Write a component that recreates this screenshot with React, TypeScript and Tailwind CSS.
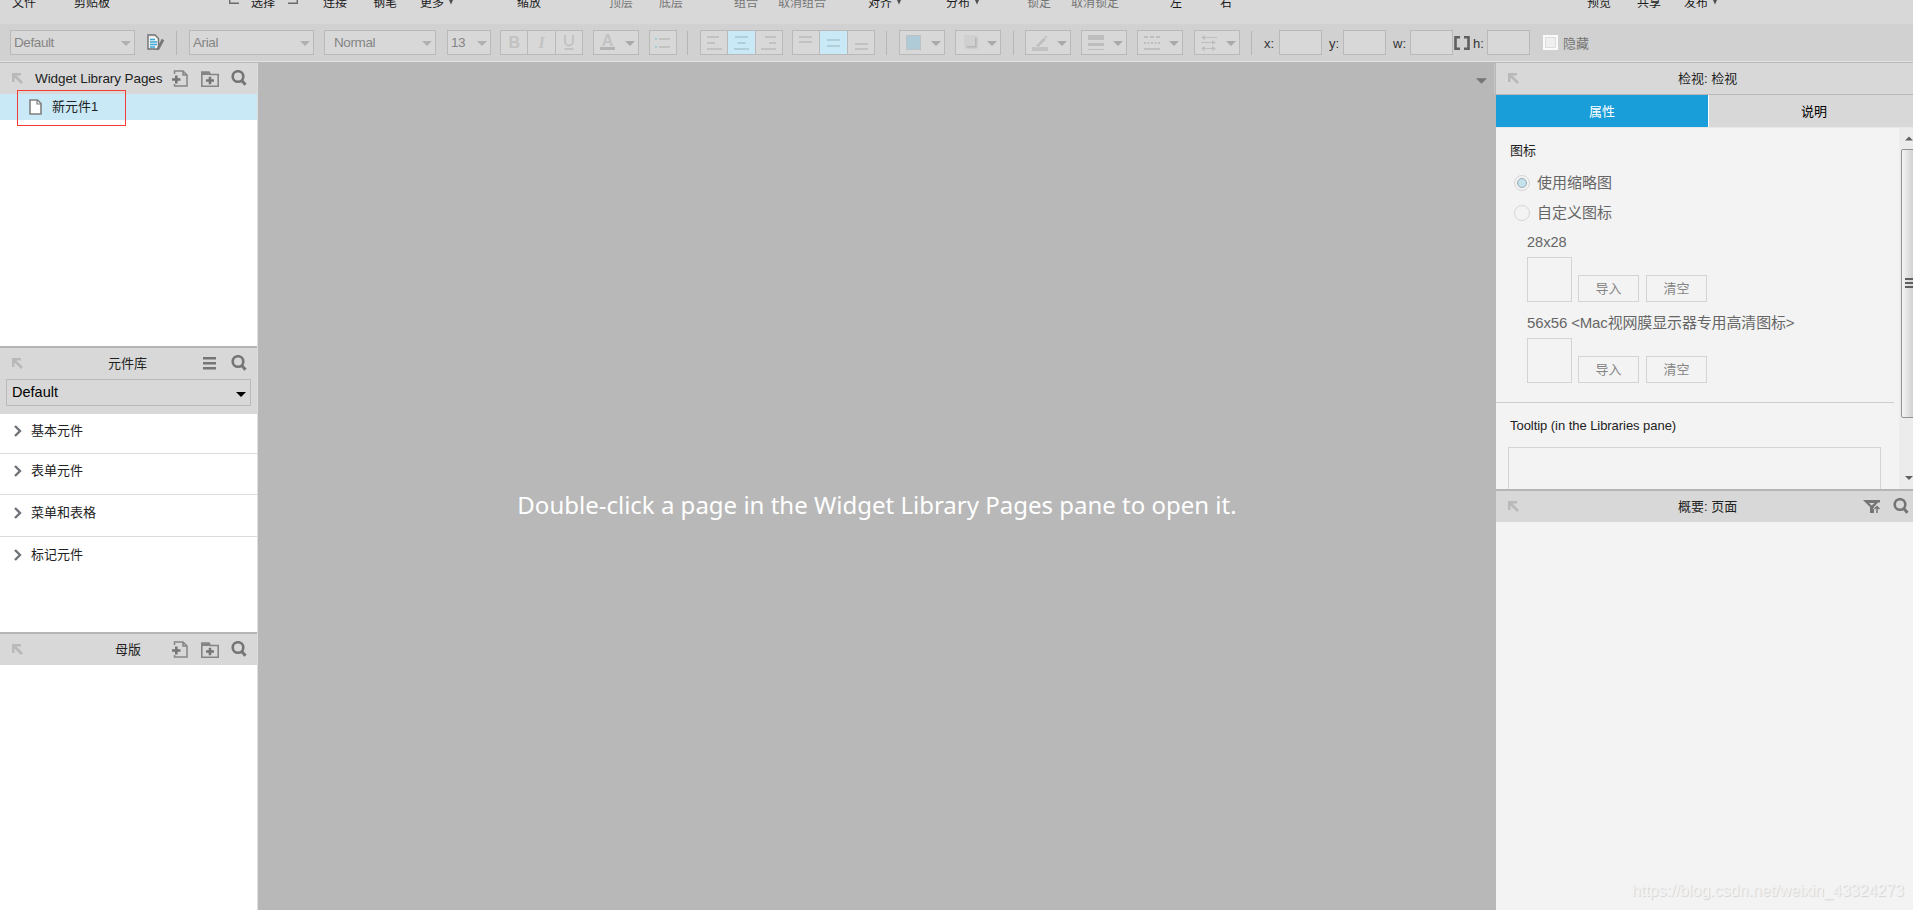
import * as React from "react"
import { clsx } from "clsx"

interface MenuItem {
  label: string;
  width: string;
  caret?: boolean;
  disabled?: boolean;
  corner?: "left" | "right";
}

const menuItems: MenuItem[] = [
  { label: "文件", width: "w-[62px]" },
  { label: "剪贴板", width: "w-[155px]" },
  { label: "", width: "w-[22px]", corner: "left" },
  { label: "选择", width: "w-[37px]" },
  { label: "", width: "w-[35px]", corner: "right" },
  { label: "连接", width: "w-[50px]" },
  { label: "钢笔", width: "w-[47px]" },
  { label: "更多", width: "w-[97px]", caret: true },
  { label: "缩放", width: "w-[92px]" },
  { label: "顶层", width: "w-[50px]", disabled: true },
  { label: "底层", width: "w-[75px]", disabled: true },
  { label: "组合", width: "w-[44px]", disabled: true },
  { label: "取消组合", width: "w-[90px]", disabled: true },
  { label: "对齐", width: "w-[78px]", caret: true },
  { label: "分布", width: "w-[81px]", caret: true },
  { label: "锁定", width: "w-[44px]", disabled: true },
  { label: "取消锁定", width: "w-[99px]", disabled: true },
  { label: "左", width: "w-[50px]" },
  { label: "右", width: "w-[367px]" },
  { label: "预览", width: "w-[50px]" },
  { label: "共享", width: "w-[47px]" },
  { label: "发布", width: "w-[60px]", caret: true },
];

const categories = [
  { label: "基本元件", height: "h-[40px]" },
  { label: "表单元件", height: "h-[41px]" },
  { label: "菜单和表格", height: "h-[42px]" },
  { label: "标记元件", height: "h-[42px]" },
];

function Triangle({ className }: { className?: string }) {
  return (
    <svg width="10" height="5" viewBox="0 0 10 5" className={clsx("shrink-0", className)}>
      <path d="M0 0h10L5 5z" fill="currentColor" />
    </svg>
  );
}

function MenuBar() {
  return (
    <div className="flex h-6 shrink-0 items-start overflow-hidden bg-[#d8d8d8] pl-3 text-xs text-[#1a1a1a]">
      {menuItems.map((item, i) => (
        <div
          key={i}
          className={clsx("-mt-[5px] flex h-4 shrink-0 items-center whitespace-nowrap", item.width, item.disabled && "text-[#757575]")}
        >
          {item.label}
          {item.corner && (
            <svg width="10" height="16" viewBox="0 0 10 16" fill="none" stroke="#6b6b6b" strokeWidth="1.4">
              <path d={item.corner === "left" ? "M.7 0v8.3H10" : "M9.3 0v8.3H0"} />
            </svg>
          )}
          {item.caret && (
            <svg width="6" height="6" viewBox="0 0 6 6" className="mb-0.5 ml-1">
              <path d="M.5 0h5L3 5.5z" fill="#505050" />
            </svg>
          )}
        </div>
      ))}
    </div>
  );
}

function Separator({ className }: { className?: string }) {
  return <div className={clsx("h-6 w-px shrink-0 bg-[#b6b6b6]", className)} />;
}

function SelectBox({ label, className }: { label: string; className?: string }) {
  return (
    <div className={clsx("flex h-[25px] shrink-0 items-center justify-between border border-[#b9b9b9] bg-[#d8d8d8] pr-[3px] text-[13.5px] tracking-[-0.4px] text-[#858585]", className)}>
      <span className="pt-0.5">{label}</span>
      <Triangle className="mt-0.5 text-[#b0b0b0]" />
    </div>
  );
}

function ButtonGroup({ className, active, children }: { className?: string; active?: number; children: React.ReactNode }) {
  return (
    <div className={clsx("flex h-[25px] w-[83px] shrink-0 border border-[#b9b9b9] bg-[#d8d8d8]", className)}>
      {React.Children.map(children, (child, i) => (
        <div
          className={clsx("flex flex-1 items-center justify-center", i > 0 && "border-l border-[#b9b9b9]", i === active && "bg-[#c9e9f6]")}
        >
          {child}
        </div>
      ))}
    </div>
  );
}

function DropButton({ className, children }: { className?: string; children: React.ReactNode }) {
  return (
    <div className={clsx("flex h-[25px] w-[46px] shrink-0 items-center justify-between border border-[#b9b9b9] bg-[#d8d8d8] pr-[3px] pl-[6px]", className)}>
      {children}
      <Triangle className="mt-0.5 text-[#a9a9a9]" />
    </div>
  );
}

function Lines({ d, active }: { d: string; active?: boolean }) {
  return (
    <svg width="16" height="16" viewBox="0 0 16 16" fill="none" stroke={active ? "#b2ced9" : "#c2c2c2"} strokeWidth="2">
      <path d={d} />
    </svg>
  );
}

function Letter({ className, children }: { className?: string; children: React.ReactNode }) {
  return <span className={clsx("text-base leading-none font-bold text-[#c2c2c2]", className)}>{children}</span>;
}

function Field({ label, className, labelWidth }: { label: string; className?: string; labelWidth: string }) {
  return (
    <label className={clsx("flex shrink-0 items-center text-[13px] text-[#333]", className)}>
      <span className={clsx("pt-0.5", labelWidth)}>{label}</span>
      <span className="h-[25px] w-[43px] border border-[#b9b9b9] bg-[#d8d8d8]" />
    </label>
  );
}

function Toolbar() {
  return (
    <div className="flex h-[39px] shrink-0 items-start border-b border-[#b8b8b8] bg-[#d1d1d1] shadow-[inset_0_-1px_0_#e3e3e3]">
      <div className="flex h-[37px] items-center">
        <SelectBox label="Default" className="ml-[10px] w-[125px] pl-[3px]" />
        <svg width="18" height="17" viewBox="0 0 18 17" fill="none" className="ml-3 shrink-0">
          <path d="M1 1h7l3.500 3.500V15H1z" fill="#f1f1f1" stroke="#707070" strokeWidth="1.4" />
          <path d="M3 5.500h5M3 8h7M3 10.500h7M3 13h5" stroke="#3aa9d8" strokeWidth="1.4" />
          <path d="M16 5.500l-4.500 8.500" stroke="#777" strokeWidth="2.800" />
          <path d="M10 16.500l.4-3.500 2.500 1.500z" fill="#777" />
        </svg>
        <Separator className="ml-[11px]" />
        <SelectBox label="Arial" className="ml-3 w-[125px] pl-[3px]" />
        <SelectBox label="Normal" className="ml-[10px] w-[112px] pl-[9px]" />
        <SelectBox label="13" className="ml-[11px] w-[44px] pl-[3px]" />

        <ButtonGroup className="ml-[9px]">
          <Letter>B</Letter>
          <Letter className="font-['Liberation_Serif'] italic">I</Letter>
          <svg width="12" height="15" viewBox="0 0 12 15" fill="none" stroke="#c2c2c2" strokeWidth="2">
            <path d="M2 0v6.500a3.800 3.800 0 0 0 8 0V0M1.500 14h9" />
          </svg>
        </ButtonGroup>
        <DropButton className="ml-[10px]">
          <span className="flex w-[15px] flex-col items-center">
            <Letter className="h-[12px] leading-[12px]!">A</Letter>
            <span className="h-[3px] w-[15px] bg-[#b3b3b3]" />
          </span>
        </DropButton>
        <div className="ml-[10px] flex h-[25px] w-7 shrink-0 items-center justify-center border border-[#b9b9b9] bg-[#d8d8d8]">
          <svg width="16" height="12" viewBox="0 0 16 12">
            <path d="M4 1h11v2H4zM4 9h11v2H4z" fill="#c2c2c2" />
            <path d="M0 1h2v2H0zM0 9h2v2H0z" fill="#a9c8d6" />
          </svg>
        </div>
        <Separator className="ml-[10px]" />
        <ButtonGroup className="ml-3" active={1}>
          <Lines d="M1 2h12M1 8h8M1 14h15" />
          <Lines d="M2 2h13M4.500 8h8M1 14h15" active />
          <Lines d="M4 2h11M8 8h7M0 14h15" />
        </ButtonGroup>
        <ButtonGroup className="ml-[9px]" active={1}>
          <Lines d="M1 2h13M1 7h13" />
          <Lines d="M2 5h13M2 11h13" active />
          <Lines d="M2 9h13M2 14h13" />
        </ButtonGroup>
        <Separator className="ml-[11px]" />

        <DropButton className="ml-3">
          <span className="size-[15px] border border-[#bcc3c6] bg-[#afcbd8]" />
        </DropButton>
        <DropButton className="ml-[10px]">
          <span className="mb-1 ml-[2px] size-[11px] bg-[#d0d0d0] shadow-[2px_2px_2px_#b5b5b5]" />
        </DropButton>
        <Separator className="ml-3" />
        <DropButton className="ml-[11px]">
          <svg width="16" height="16" viewBox="0 0 16 16" className="shrink-0">
            <path d="M0 12h4l1 1 2-1h9v4H0z" fill="#c2c2c2" />
            <path d="M5 11.500L13 3.500M13.500 2.500l1-1" stroke="#bebebe" strokeWidth="2.600" />
          </svg>
        </DropButton>
        <DropButton className="ml-[10px]">
          <svg width="16" height="16" viewBox="0 0 16 16" fill="#bebebe" className="shrink-0">
            <path d="M0 0h16v5H0zM0 8h16v3H0zM0 14h16v1H0z" />
          </svg>
        </DropButton>
        <DropButton className="ml-[10px]">
          <svg width="16" height="16" viewBox="0 0 16 16" fill="none" stroke="#bebebe" strokeWidth="2" className="shrink-0">
            <path d="M0 2h16" strokeDasharray="4 2" />
            <path d="M0 8h16" strokeDasharray="2 1.500" />
            <path d="M0 14h16" />
          </svg>
        </DropButton>
        <DropButton className="ml-[11px]">
          <svg width="16" height="16" viewBox="0 0 16 16" fill="none" stroke="#bebebe" className="shrink-0">
            <path d="M1 2.500h15M0 7.500h14M2 13.500h12" />
            <path d="M4 0v5L0 2.500zM11 5v5l4-2.500zM4 11v5l-4-2.500zM11 11v5l4-2.500z" fill="#bebebe" stroke="none" />
          </svg>
        </DropButton>
        <Separator className="ml-[11px]" />

        <Field label="x:" className="ml-3" labelWidth="w-[15px]" />
        <Field label="y:" className="ml-[7px]" labelWidth="w-[14px]" />
        <Field label="w:" className="ml-[7px]" labelWidth="w-[17px]" />
        <svg width="16" height="14" viewBox="0 0 16 14" fill="none" stroke="#606060" strokeWidth="2.600" className="ml-px shrink-0">
          <path d="M6 1.300H1.500v11.400H6M10 1.300h4.500v11.400H10" />
        </svg>
        <Field label="h:" className="ml-[3px]" labelWidth="w-[14px]" />
        <span className="ml-[13px] size-[15px] shrink-0 border-2 border-[#fafafa] bg-[#efefef] ring-1 ring-[#dedede] ring-inset" />
        <span className="ml-[5px] shrink-0 pt-[3px] text-[13px] text-[#757575]">隐藏</span>
      </div>
    </div>
  );
}

function PinIcon() {
  return (
    <svg width="11" height="11" viewBox="0 0 11 11" className="shrink-0">
      <path d="M0 0h9v2.500H4.500L11 9 9 11 2.500 4.500V9H0z" fill="#b9b9b9" />
    </svg>
  );
}

function SearchIcon({ className }: { className?: string }) {
  return (
    <svg width="16" height="16" viewBox="0 0 16 16" fill="none" stroke="#757575" className={clsx("shrink-0", className)}>
      <circle cx="7" cy="6.500" r="5.300" strokeWidth="2.600" />
      <path d="M10.500 10.300L14.500 14.800" strokeWidth="3" />
    </svg>
  );
}

function AddPageIcon() {
  return (
    <svg width="16" height="17" viewBox="0 0 16 17" fill="none" stroke="#858585" className="shrink-0">
      <path d="M2.500 4V1h8.500l4 4v11H2.500v-2M11 1v4h4" strokeWidth="1.500" />
      <path d="M0 9.500h8.500M4.300 5.500v8" stroke="#757575" strokeWidth="2.600" />
    </svg>
  );
}

function AddFolderIcon() {
  return (
    <svg width="18" height="16" viewBox="0 0 18 16" fill="none" className="shrink-0">
      <path d="M.8 15.200V1H8l1.500 2.500h7.700v11.700z" stroke="#858585" strokeWidth="1.600" />
      <path d="M1 1h7l1.500 3H1z" fill="#858585" />
      <path d="M5 9.500h8M9 5.700v7.600" stroke="#757575" strokeWidth="2.600" />
    </svg>
  );
}

function PaneHeader({ title, className, children }: { title: string; className?: string; children?: React.ReactNode }) {
  return (
    <div className="relative flex h-[31px] shrink-0 items-center bg-[#d8d8d8] pl-3 text-[13px] text-[#222]">
      <PinIcon />
      <span className={clsx("whitespace-nowrap", className)}>{title}</span>
      <div className="ml-auto flex items-center">{children}</div>
    </div>
  );
}

function PageTools() {
  return (
    <div className="flex items-center gap-[13px] pr-[10px]">
      <AddPageIcon />
      <AddFolderIcon />
      <SearchIcon className="-mt-px -ml-px" />
    </div>
  );
}

function LeftColumn() {
  return (
    <div className="flex w-[258px] shrink-0 flex-col border-r border-[#dedede] bg-white">
      <section className="relative flex h-[283px] shrink-0 flex-col">
        <PaneHeader title="Widget Library Pages" className="ml-3 pt-0.5 text-[13.500px] tracking-[-0.080px]">
          <PageTools />
        </PaneHeader>
        <div className="flex h-[26px] items-center bg-[#c9e9f6] pl-[29px] text-[13px] text-[#222]">
          <svg width="13" height="16" viewBox="0 0 13 16" className="mr-[10px] shrink-0">
            <path d="M1 1h7.500L12 4.500V15H1z" fill="#fff" stroke="#808080" strokeWidth="1.600" />
            <path d="M8 1v4h4" fill="none" stroke="#808080" strokeWidth="1.200" />
          </svg>
          <span className="pb-px">新元件1</span>
        </div>
        {/* Highlight over the first page */}
        <div className="absolute top-[27px] left-[17px] h-[36px] w-[109px] border border-[#f33b38]" />
      </section>

      <section className="flex h-[286px] shrink-0 flex-col border-t-2 border-[#b5b5b5]">
        <PaneHeader title="元件库" className="ml-[85px] pt-px">
          <svg width="13" height="13" viewBox="0 0 13 13" className="mr-[15px]">
            <path d="M0 0h13v2.500H0zM0 5h13v2.500H0zM0 10h13v2.500H0z" fill="#757575" />
          </svg>
          <SearchIcon className="-mt-px mr-[10px]" />
        </PaneHeader>
        <div className="h-[35px] shrink-0 bg-[#d8d8d8] px-[6px]">
          <div className="flex h-[27px] w-[245px] items-center justify-between border border-[#bababa] pr-[4px] pl-[5px] text-[14.500px] text-black">
            <span className="pt-px">Default</span>
            <Triangle className="mt-1 text-black" />
          </div>
        </div>
        {categories.map((category, i) => (
          <div
            key={category.label}
            className={clsx("flex shrink-0 items-center pb-[6px] pl-[14px] text-[13px] text-[#222]", category.height, i < 3 && "border-b border-[#dcdcdc]")}
          >
            <svg width="8" height="12" viewBox="0 0 8 12" fill="none" className="mr-[9px]">
              <path d="M1 1l5 5-5 5" stroke="#6f7378" strokeWidth="2.400" />
            </svg>
            {category.label}
          </div>
        ))}
      </section>

      <section className="flex flex-1 flex-col border-t-2 border-[#b5b5b5]">
        <PaneHeader title="母版" className="ml-[92px] pt-px">
          <PageTools />
        </PaneHeader>
      </section>
    </div>
  );
}

function Canvas() {
  return (
    <div className="relative flex flex-1 justify-center bg-[#b8b8b8]">
      <Triangle className="absolute top-[15px] right-[9px] h-[6px] w-[11px] text-[#757575]" />
      <div className="absolute top-0 right-px h-[31px] w-px bg-[#c6c6c6]" />
      <p className="mt-[424px] font-['Noto_Sans'] text-[24px] leading-[36px] whitespace-nowrap text-white">
        Double-click a page in the Widget Library Pages pane to open it.
      </p>
    </div>
  );
}

function Radio({ label, checked }: { label: string; checked?: boolean }) {
  return (
    <div className="flex h-[30px] items-center pl-[18px] text-[15px] text-[#666]">
      <span className="mr-[7px] flex size-4 items-center justify-center rounded-full border border-[#d6d6d6]">
        {checked && <span className="size-[10px] rounded-full border border-[#98aab5] bg-[#c5e1ec]" />}
      </span>
      {label}
    </div>
  );
}

function ImportRow({ className }: { className?: string }) {
  return (
    <div className={clsx("flex items-end pl-[31px] text-[13px] text-[#858585]", className)}>
      <div className="size-[45px] border border-[#d3d3d3]" />
      <button className="ml-[6px] h-[27px] w-[61px] border border-[#d3d3d3] pt-px">导入</button>
      <button className="ml-[7px] h-[27px] w-[61px] border border-[#d3d3d3] pt-px">清空</button>
    </div>
  );
}

function ScrollBar() {
  return (
    <div className="flex w-[14px] shrink-0 flex-col overflow-hidden bg-[#ececec] pl-[2px]">
      <svg width="8" height="5" viewBox="0 0 8 5" className="mt-2 ml-1 shrink-0">
        <path d="M0 4.500L4 .5l4 4z" fill="#606060" />
      </svg>
      <div className="mt-2 flex h-[269px] w-[17px] shrink-0 items-center rounded-xs border border-[#929292] bg-linear-to-r from-[#f5f5f5] to-[#c4c4c4] pl-[3px]">
        <svg width="12" height="10" viewBox="0 0 12 10" className="mb-0.5">
          <path d="M0 0h12v2H0zM0 4h12v2H0zM0 8h12v2H0z" fill="#606060" />
        </svg>
      </div>
      <Triangle className="mt-[58px] ml-1 h-[4px] w-[8px] text-[#606060]" />
    </div>
  );
}

function RightColumn() {
  return (
    <div className="flex w-[417px] shrink-0 flex-col bg-[#f3f3f3]">
      <PaneHeader title="检视: 检视" className="ml-[159px] pt-px" />
      <div className="flex h-[34px] shrink-0 border-t border-b border-t-[#b8b8b8] border-b-[#e8e8e8] text-[13px]">
        <div className="flex w-[212px] items-center justify-center bg-[#1a9ed9] pt-0.5 text-white">属性</div>
        <div className="flex flex-1 items-center justify-center border-l border-white bg-[#d8d8d8] pt-0.5 pl-[6px] text-black">说明</div>
      </div>
      <div className="flex h-[361px] shrink-0 overflow-hidden">
        <div className="flex flex-1 flex-col">
          <div className="pt-[13px] pl-[14px] text-[13px] leading-5 text-[#222]">图标</div>
          <div className="mt-[7px]">
            <Radio label="使用缩略图" checked />
            <Radio label="自定义图标" />
          </div>
          <div className="pt-1 pl-[31px] text-[14.500px] leading-5 text-[#666]">28x28</div>
          <ImportRow className="mt-[5px]" />
          <div className="mt-[11px] pl-[31px] text-[15px] leading-5 tracking-[-0.150px] whitespace-nowrap text-[#666]">
            56x56 &lt;Mac视网膜显示器专用高清图标&gt;
          </div>
          <ImportRow className="mt-[5px]" />
          <div className="mt-[19px] mr-[5px] h-px shrink-0 bg-[#cecece]" />
          <div className="mt-[13px] pl-[14px] text-[13px] leading-5 tracking-[-0.050px] text-[#222]">Tooltip (in the Libraries pane)</div>
          <div className="mt-[11px] ml-3 h-[80px] w-[373px] shrink-0 border border-[#d3d3d3]" />
        </div>
        <ScrollBar />
      </div>
      <section className="relative flex flex-1 flex-col border-t-2 border-[#b5b5b5]">
        <PaneHeader title="概要: 页面" className="ml-[159px] pt-px">
          <svg width="18" height="14" viewBox="0 0 18 14" className="mr-3">
            <path d="M0 0h17v2.500h-2L11 7v6H7V7z" fill="#757575" />
            <path d="M6 3h5.500L8.700 5.500z" fill="#d8d8d8" />
            <path d="M14 14V6M11 9.500L14 6.500l3 3" fill="none" stroke="#d8d8d8" strokeWidth="3" />
            <path d="M14 13V6.500M11.500 9L14 6.500 16.500 9" fill="none" stroke="#757575" strokeWidth="1.500" />
          </svg>
          <SearchIcon className="-mt-px mr-1" />
        </PaneHeader>
        <span className="absolute right-[9px] bottom-[7px] text-base leading-6 whitespace-nowrap text-[#f3f3f3] [text-shadow:1px_1px_1px_#d3d3d3]">
          https://blog.csdn.net/weixin_43324273
        </span>
      </section>
    </div>
  );
}

export default function App() {
  return (
    <div className="flex h-[910px] w-[1913px] flex-col overflow-hidden bg-[#d8d8d8] font-['Liberation_Sans','Noto_Sans_CJK_SC',sans-serif]">
      <MenuBar />
      <Toolbar />
      <div className="flex min-h-0 flex-1">
        <LeftColumn />
        <Canvas />
        <RightColumn />
      </div>
    </div>
  );
}
